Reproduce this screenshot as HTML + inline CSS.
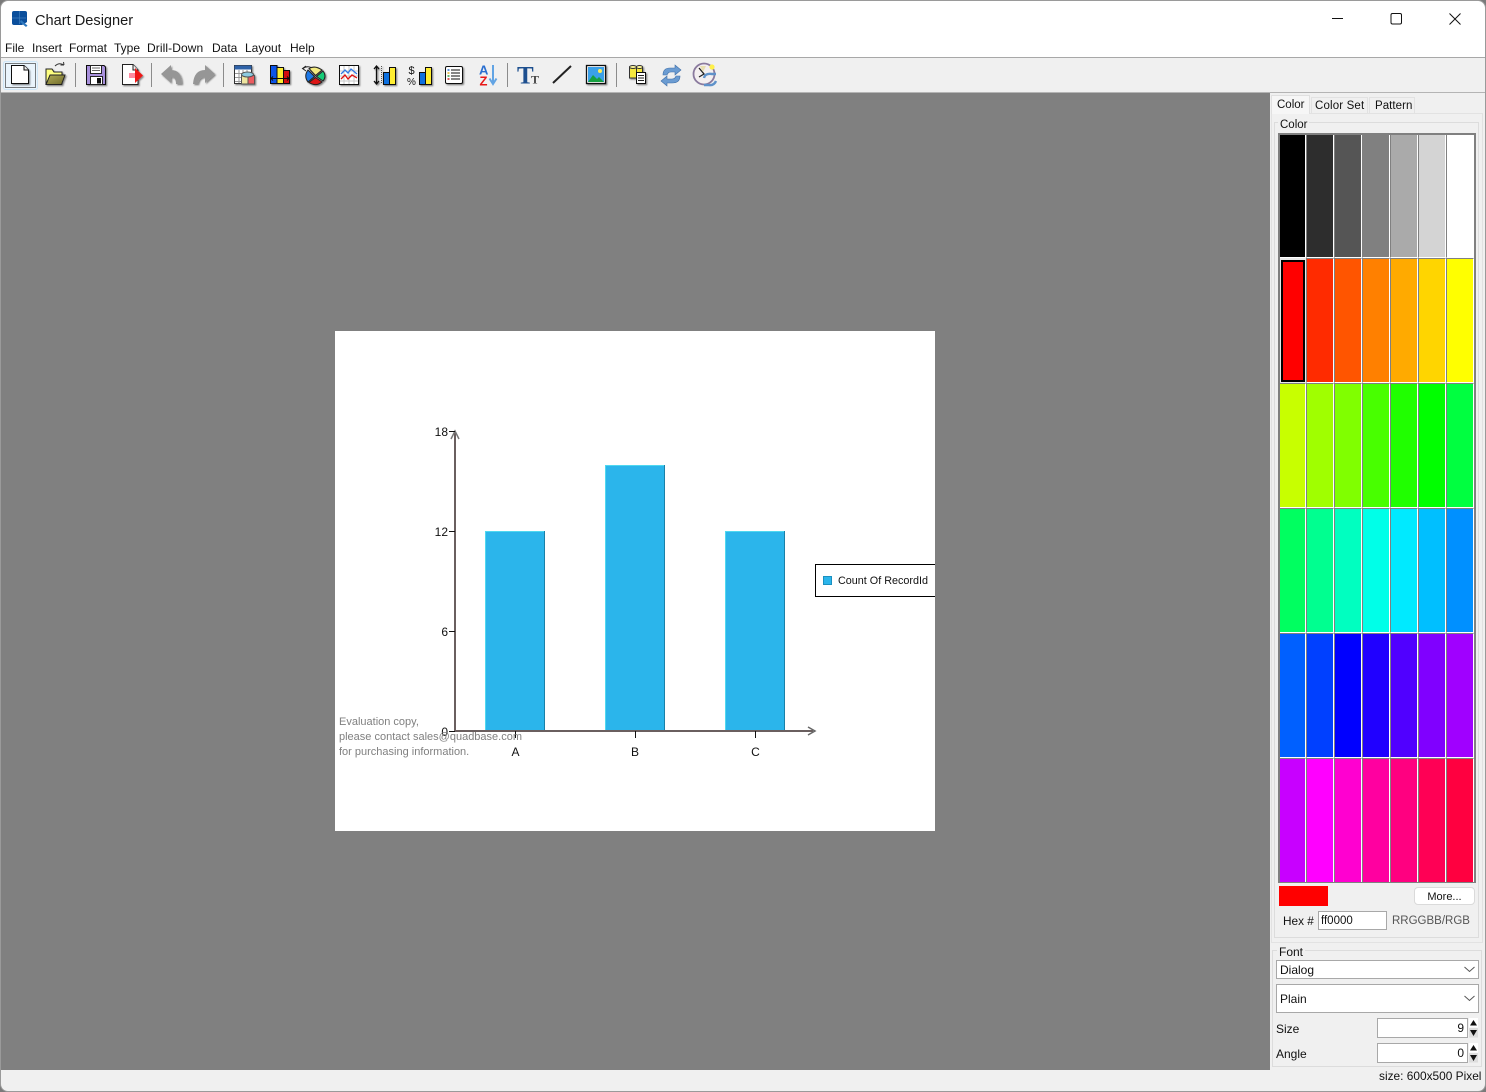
<!DOCTYPE html>
<html><head><meta charset="utf-8"><title>Chart Designer</title>
<style>
html,body{margin:0;padding:0;width:1486px;height:1092px;overflow:hidden;background:#7a7a7a}
body{position:relative;font-family:"Liberation Sans",sans-serif;color:#111}
.a{position:absolute;white-space:nowrap}
.t{font-size:12px;line-height:14px}
#win{position:absolute;left:0;top:0;width:1484px;height:1090px;border:1px solid #9a9a9a;border-radius:8px;background:#f0f0f0;overflow:hidden}
#grid{position:absolute;left:1278px;top:133px;display:grid;grid-template-columns:repeat(7,28px);grid-auto-rows:125px;width:196px}
#grid i{display:block;box-sizing:border-box;border-left:1px solid #808080;border-right:1px solid #fff;border-top:1px solid #808080;border-bottom:1px solid #fff}
.input{position:absolute;box-sizing:border-box;background:#fff;border:1px solid #a8a8a8}
.fs{position:absolute;box-sizing:border-box;border:1px solid #dcdcdc}
</style></head><body>
<div id="win"></div>

<!-- title bar -->
<div class="a" style="left:1px;top:1px;width:1484px;height:56px;background:#fff;border-radius:8px 8px 0 0"></div>
<div class="a" style="left:1px;top:57px;width:1484px;height:1px;background:#a8a8a8"></div>
<div class="a" style="left:35px;top:12px;font-size:14.6px;line-height:18px;color:#1a1a1a">Chart Designer</div>
<div class="a t" style="left:5px;top:41px">File</div>
<div class="a t" style="left:32px;top:41px">Insert</div>
<div class="a t" style="left:69px;top:41px">Format</div>
<div class="a t" style="left:114px;top:41px">Type</div>
<div class="a t" style="left:147px;top:41px;letter-spacing:.1px">Drill-Down</div>
<div class="a t" style="left:212px;top:41px">Data</div>
<div class="a t" style="left:245px;top:41px">Layout</div>
<div class="a t" style="left:290px;top:41px">Help</div>

<!-- canvas -->
<div class="a" style="left:1px;top:93px;width:1269px;height:977px;background:#808080"></div>
<div class="a" style="left:1px;top:92px;width:1484px;height:1px;background:#b4b4b4"></div>
<div class="a" style="left:335px;top:331px;width:600px;height:500px;background:#fff"></div>

<svg class="a" style="left:0;top:0" width="1486" height="1092" viewBox="0 0 1486 1092" font-family="Liberation Sans, sans-serif">
  <defs>
    <filter id="sh" x="-20%" y="-20%" width="150%" height="150%"><feDropShadow dx="1.200" dy="1.200" stdDeviation=".7" flood-color="#000" flood-opacity=".45"/></filter>
    <linearGradient id="fold" x1="0" y1="0" x2="1" y2="1"><stop offset="0" stop-color="#b3ad58"/><stop offset="1" stop-color="#6f6a2a"/></linearGradient>
  </defs>
  <!-- app icon -->
  <path d="M12 13a2 2 0 0 1 2-2h11a2 2 0 0 1 2 2v9l-3 2-2 1h-8a2 2 0 0 1-2-2z" fill="#0b4f9c"/>
  <path d="M19.500 11v13M12 18h14" stroke="#3f7fbe" stroke-width=".7"/>
  <path d="M21 20l6.500 5.500-1.500 1.500-6-5z" fill="#2d78bf"/>
  <!-- window controls -->
  <path d="M1332 18.500h11" stroke="#111" stroke-width="1"/>
  <rect x="1391" y="13.500" width="10.500" height="10.500" rx="1.500" fill="none" stroke="#111" stroke-width="1"/>
  <path d="M1449.500 13.500l11 11m0-11l-11 11" stroke="#111" stroke-width="1"/>

  <!-- toolbar focus -->
  <rect x="3.500" y="61.500" width="34" height="28" rx="2" fill="#eaf4fc" stroke="#cfe6f7"/>
  <rect x="5.500" y="63.500" width="30" height="24" fill="none" stroke="#000" stroke-dasharray="1 1" shape-rendering="crispEdges"/>
  <!-- separators -->
  <path d="M75.500 63v24M151.500 63v24M223.500 63v24M507.500 63v24M616.500 63v24" stroke="#8c8c8c"/>

  <g filter="url(#sh)">
  <!-- new -->
  <path d="M11.500 65.500H24L28.500 70V83.500H11.500Z" fill="#fff" stroke="#111"/><path d="M24 65.500V70H28.500" fill="#f0f0f0" stroke="#111"/>
  <!-- open -->
  <path d="M46 84V69H52L54 72H62V84Z" fill="#ffff80" stroke="#222"/>
  <path d="M46 84.500L50 75H65L61.500 84.500Z" fill="url(#fold)" stroke="#222"/>
  <!-- save -->
  <path d="M86.500 65.500H104L105.500 67V84.500H86.500Z" fill="#a890dc" stroke="#111"/>
  <rect x="90.500" y="65.500" width="11" height="8" fill="#fff" stroke="#222"/>
  <path d="M92 68h8M92 70.500h8" stroke="#666"/>
  <rect x="90.500" y="76.500" width="12" height="8" fill="#fff" stroke="#222"/><rect x="97" y="78" width="4" height="5.500" fill="#111"/>
  <!-- export -->
  <path d="M122.500 64.500H133L138 70V84.500H122.500Z" fill="#fff" stroke="#222"/><path d="M133 64.500V70H138" fill="#eee" stroke="#222"/>
  <path d="M129 73H135V68L143 75.500 135 83V78H129Z" fill="#ee1515"/><path d="M129 73H135V78H129Z" fill="#ff8aa0"/>
  <!-- undo/redo -->
  <path d="M161 74L171 65V70Q182 70 182 84H176Q176 77 171 77V83Z" fill="#969696"/>
  <path d="M215 74L205 65V70Q194 70 193 84H198Q199 77 205 77V83Z" fill="#969696"/>
  <!-- table -->
  <rect x="234.500" y="65.500" width="17" height="18" fill="#fff" stroke="#333"/>
  <rect x="234.500" y="65.500" width="17" height="4" fill="#2e62a8"/>
  <path d="M235 73.500H251M235 77.500H251M235 81.500H251M239 70V83M243 70V83M247 70V83" stroke="#999"/>
  <rect x="241.500" y="75.500" width="7" height="8.500" fill="#eee5a0" stroke="#555"/>
  <rect x="248" y="75.500" width="6.500" height="8.500" fill="#ec5c60" stroke="#555"/>
  <ellipse cx="247.500" cy="74.500" rx="6" ry="2.500" fill="#8dcbe0" stroke="#555"/>
  <!-- columns type -->
  <g stroke="#111">
    <rect x="270.500" y="65.500" width="6.500" height="18" fill="#0d55e8"/>
    <rect x="277" y="67.500" width="6.500" height="16" fill="#ffee33"/>
    <rect x="283.500" y="70.500" width="6" height="13" fill="#d40f0f"/>
    <path d="M271 78.500H289M273 76.500L271 78.500 273 80.500M287 76.500L289 78.500 287 80.500" fill="none"/>
  </g>
  <!-- pie -->
  <path d="M309 68.500Q315 65 322 70L315.500 75.500Z" fill="#f2ea80" stroke="#222"/>
  <path d="M316.500 76.500L323 71Q327 76 323 81Z" fill="#12cc78" stroke="#222"/>
  <path d="M315.500 77.500L322 82Q316 87 309 82.500Z" fill="#dc1616" stroke="#222"/>
  <path d="M314.500 76.500L308 82Q303.500 76 308 70Z" fill="#1a78e8" stroke="#222"/>
  <!-- line chart -->
  <rect x="339.500" y="65.500" width="19" height="19" fill="#fff" stroke="#111"/>
  <path d="M344 66V84M349 66V84M354 66V84M340 71H358M340 76H358M340 81H358" stroke="#c8c8c8"/>
  <path d="M341 74L345 70 348 73 351 69 357 74" fill="none" stroke="#2f78e6" stroke-width="1.300"/>
  <path d="M341 79L345 75 348 79 352 75 357 78" fill="none" stroke="#e01010" stroke-width="1.300"/>
  <!-- axis bars -->
  <g stroke="#111">
    <path d="M376.500 66V84M374 69L376.500 66 379 69M374 81L376.500 84 379 81" fill="none" stroke-width="1.300"/>
    <path d="M381.500 66V84" stroke-dasharray="1 1" stroke="#555"/>
    <rect x="383.500" y="72.500" width="6" height="12" fill="#0d6fe0"/><rect x="389.500" y="67.500" width="6" height="17" fill="#ffee33"/>
    <rect x="419.500" y="72.500" width="6" height="12" fill="#0d6fe0"/><rect x="425.500" y="67.500" width="6" height="17" fill="#ffee33"/>
  </g>
  <!-- list -->
  <rect x="445.500" y="66.500" width="17" height="17" rx="1.500" fill="#fff" stroke="#111"/>
  <path d="M451 70H460M451 73H460M451 76H460M451 79H460" stroke="#111"/>
  <path d="M447.500 70h2" stroke="#2a6fd0" stroke-width="1.500"/><path d="M447.500 73h2" stroke="#e0b020" stroke-width="1.500"/><path d="M447.500 76h2" stroke="#30a040" stroke-width="1.500"/><path d="M447.500 79h2" stroke="#d02020" stroke-width="1.500"/>
  </g>
  <!-- open arrow, pie arrow -->
  <path d="M55 66Q59 62 64 65M64 65L60.500 65M64 65L63.500 62" fill="none" stroke="#333"/>
  <path d="M306 66L302.500 68.500 306 71M303 68.500Q307 65.500 311 67.500" fill="none" stroke="#222"/>
  <text x="408.500" y="74" font-size="11" fill="#111">$</text><text x="407" y="85" font-size="10" fill="#111">%</text>
  <!-- sort -->
  <text x="479" y="74.500" font-size="13" font-weight="bold" fill="#2a6fd0">A</text>
  <text x="479.500" y="85.500" font-size="13" font-weight="bold" fill="#e81818">Z</text>
  <path d="M493 65V83M489.500 78.500L493 84 496.500 78.500" fill="none" stroke="#62a4e4" stroke-width="2"/>
  <!-- text -->
  <text x="517" y="83.500" font-size="25" font-weight="bold" font-family="Liberation Serif, serif" fill="#1d4f8f">T</text>
  <text x="531" y="83.500" font-size="12" font-weight="bold" font-family="Liberation Serif, serif" fill="#444">T</text>
  <!-- line -->
  <path d="M553 83L571 66" stroke="#222" stroke-width="2"/>
  <g filter="url(#sh)">
  <!-- image -->
  <rect x="586.500" y="65.500" width="19" height="18" fill="#fff" stroke="#111" stroke-width="1.300"/>
  <rect x="588" y="67" width="16" height="15" fill="#3aa0e8"/>
  <circle cx="600" cy="71" r="2" fill="#ffee55"/>
  <path d="M588 82L593 75 597 79 599 77 604 82Z" fill="#12a040"/>
  <!-- data -->
  <rect x="629.500" y="67" width="7" height="11" fill="#f5e83c" stroke="#333"/>
  <rect x="636.500" y="67" width="6" height="11" fill="#f5e83c" stroke="#333"/>
  <ellipse cx="633" cy="67" rx="3.500" ry="1.500" fill="#fff79a" stroke="#333"/>
  <ellipse cx="639.500" cy="67" rx="3" ry="1.500" fill="#fff79a" stroke="#333"/>
  <rect x="636.500" y="72.500" width="9" height="11" fill="#fff" stroke="#111"/>
  <path d="M638 75.500h6M638 78h6M638 80.500h6" stroke="#222"/>
  </g>
  <!-- refresh -->
  <path d="M663 75Q663 68 670 68H675V65L681 70 675 75V72H671Q668 72 667 75Z" fill="#6b9cd2" stroke="#3f6fa8" stroke-width=".6"/>
  <path d="M680 76Q680 83 672 83H667V86L661 81 667 76V79H672Q675 79 676 76Z" fill="#6b9cd2" stroke="#3f6fa8" stroke-width=".6"/>
  <!-- clock -->
  <circle cx="704" cy="74" r="10.500" fill="#f4eff0" stroke="#8a7a9e" stroke-width="1.800"/>
  <path d="M699 68L704 74 699 77" fill="none" stroke="#222" stroke-width="1.300"/>
  <path d="M700 66L706 66 703 72Z" fill="#e8dfb0"/>
  <circle cx="712" cy="67" r="2.600" fill="#fff04a"/>
  <path d="M704 78Q705 73 712 74H716M716 81Q714 86 708 85H704" fill="none" stroke="#5f92ca" stroke-width="2.400"/>

  <!-- bars -->
  <rect x="485" y="531" width="60" height="200" fill="#2bb5eb"/>
  <rect x="605" y="465" width="60" height="266" fill="#2bb5eb"/>
  <rect x="725" y="531" width="60" height="200" fill="#2bb5eb"/>
  <path d="M485.500 731V531.500H545M605.500 731V465.500H665M725.500 731V531.500H785" fill="none" stroke="#4fd8f0"/>
  <path d="M544.500 531V731M664.500 465V731M784.500 531V731" stroke="#1a80a8"/>
  <!-- axes -->
  <path d="M455 433V731H813" fill="none" stroke="#6a5f5f" stroke-width="2"/>
  <path d="M451 439L455 431 459 439" fill="none" stroke="#777" stroke-width="1.500"/>
  <path d="M808 727L815 731 808 735" fill="none" stroke="#666" stroke-width="1.500"/>
  <path d="M449 431.500h6M449 531.500h6M449 631.500h6M449 731.500h6M515.500 731v7M635.500 731v7M755.500 731v7" stroke="#111"/>
  <g font-size="12" fill="#111" text-anchor="end">
    <text x="448" y="436">18</text><text x="448" y="536">12</text><text x="448" y="636">6</text><text x="448" y="736">0</text>
  </g>
  <g font-size="12" fill="#111" text-anchor="middle">
    <text x="515.500" y="756">A</text><text x="635" y="756">B</text><text x="755.500" y="756">C</text>
  </g>
  <g font-size="11" fill="#808080">
    <text x="339" y="725">Evaluation copy,</text>
    <text x="339" y="740">please contact sales@quadbase.com</text>
    <text x="339" y="755">for purchasing information.</text>
  </g>
  <!-- legend -->
  <path d="M935 564.500H815.500V596.500H935" fill="#fff" stroke="#000"/>
  <rect x="823.500" y="576.500" width="8" height="8" fill="#2bb5eb" stroke="#1a90c0"/>
  <text x="838" y="584" font-size="10.800" fill="#111">Count Of RecordId</text>
</svg>

<!-- right panel -->
<div class="a" style="left:1271px;top:113px;width:212px;height:830px;border:1px solid #e2e2e2;box-sizing:border-box"></div>
<div class="a" style="left:1271px;top:95px;width:39px;height:19px;background:#f6f6f6;border:1px solid #e0e0e0;border-bottom:0;box-sizing:border-box"></div>
<div class="a" style="left:1311px;top:97px;width:57px;height:16px;border:1px solid #e2e2e2;border-bottom:0;box-sizing:border-box"></div>
<div class="a" style="left:1369px;top:97px;width:46px;height:16px;border:1px solid #e2e2e2;border-bottom:0;box-sizing:border-box"></div>
<div class="a t" style="left:1277px;top:98px;font-size:11.500px">Color</div>
<div class="a t" style="left:1315px;top:99px;font-size:11.500px;letter-spacing:.15px">Color Set</div>
<div class="a t" style="left:1375px;top:99px;font-size:11.500px;letter-spacing:.05px">Pattern</div>

<div class="fs" style="left:1274px;top:122px;width:205px;height:816px"></div>
<div class="a t" style="left:1278px;top:118px;background:#f0f0f0;padding:0 2px;font-size:11.500px">Color</div>

<div id="grid">
<i style="background:#000"></i><i style="background:#2d2d2d"></i><i style="background:#555"></i><i style="background:#808080"></i><i style="background:#aaa"></i><i style="background:#d4d4d4"></i><i style="background:#fff"></i>
<i style="background:#ff0000"></i><i style="background:#ff2b00"></i><i style="background:#ff5500"></i><i style="background:#ff8000"></i><i style="background:#ffaa00"></i><i style="background:#ffd500"></i><i style="background:#ffff00"></i>
<i style="background:#c8ff00"></i><i style="background:#a0ff00"></i><i style="background:#80ff00"></i><i style="background:#48ff00"></i><i style="background:#20ff00"></i><i style="background:#00ff00"></i><i style="background:#00ff40"></i>
<i style="background:#00ff60"></i><i style="background:#00ff90"></i><i style="background:#00ffc0"></i><i style="background:#00ffe8"></i><i style="background:#00eaff"></i><i style="background:#00bfff"></i><i style="background:#0090ff"></i>
<i style="background:#0060ff"></i><i style="background:#0040ff"></i><i style="background:#0000ff"></i><i style="background:#2000ff"></i><i style="background:#5000ff"></i><i style="background:#8000ff"></i><i style="background:#a000ff"></i>
<i style="background:#c800ff"></i><i style="background:#ff00ff"></i><i style="background:#ff00d0"></i><i style="background:#ff00a0"></i><i style="background:#ff0080"></i><i style="background:#ff0055"></i><i style="background:#ff0040"></i>
</div>
<div class="a" style="left:1278px;top:133px;width:198px;height:2px;background:#808080"></div>
<div class="a" style="left:1278px;top:133px;width:2px;height:750px;background:#808080"></div>
<div class="a" style="left:1474px;top:133px;width:2px;height:750px;background:#808080"></div>
<div class="a" style="left:1278px;top:882px;width:198px;height:1px;background:#808080"></div>
<div class="a" style="left:1280px;top:258px;width:26px;height:125px;background:#e8e8e8"></div>
<div class="a" style="left:1281px;top:260px;width:24px;height:122px;box-sizing:border-box;border:2px solid #000;background:#f00"></div>

<div class="a" style="left:1279px;top:886px;width:49px;height:20px;background:#ff0000"></div>
<div class="a t" style="left:1414px;top:887px;width:61px;height:18px;box-sizing:border-box;background:#fff;border:1px solid #dadada;border-radius:4px;text-align:center;line-height:17px;font-size:11px;padding-top:1px">More...</div>
<div class="a t" style="left:1283px;top:914px;font-size:11.800px">Hex #</div>
<div class="input t" style="left:1318px;top:911px;width:69px;height:19px;padding:1px 0 0 2px;line-height:17px;font-size:11.500px">ff0000</div>
<div class="a t" style="left:1392px;top:914px;color:#555;font-size:11.500px">RRGGBB/RGB</div>

<!-- font -->
<div class="fs" style="left:1272px;top:950px;width:210px;height:117px"></div>
<div class="a t" style="left:1277px;top:945px;background:#f0f0f0;padding:0 2px;font-size:12px">Font</div>
<div class="input t" style="left:1276px;top:960px;width:203px;height:19px;padding:1px 0 0 3px;line-height:17px">Dialog</div>
<div class="input t" style="left:1276px;top:984px;width:203px;height:29px;padding:1px 0 0 3px;line-height:27px">Plain</div>
<svg class="a" style="left:1460px;top:960px" width="20" height="50"><path d="M4.500 7l5 4.500 5-4.500M4.500 36l5 4.500 5-4.500" fill="none" stroke="#555"/></svg>
<div class="a t" style="left:1276px;top:1022px">Size</div>
<div class="a t" style="left:1276px;top:1047px">Angle</div>
<div class="input t" style="left:1377px;top:1018px;width:91px;height:20px;text-align:right;padding-right:3px;line-height:18px">9</div>
<div class="input t" style="left:1377px;top:1043px;width:91px;height:20px;text-align:right;padding-right:3px;line-height:18px">0</div>
<svg class="a" style="left:1469px;top:1018px" width="10" height="46">
  <rect width="9" height="9.500" fill="#fff"/><rect y="10" width="9" height="9.500" fill="#ddd"/>
  <rect y="25" width="9" height="9.500" fill="#fff"/><rect y="35" width="9" height="9.500" fill="#ddd"/>
  <path d="M4.500 2L8 7.500H1ZM1 12H8L4.500 18ZM4.500 27L8 32.500H1ZM1 37H8L4.500 43Z" fill="#111"/>
</svg>
<div class="a t" style="left:1379px;top:1069px;font-size:11.900px">size: 600x500 Pixel</div>
</body></html>
